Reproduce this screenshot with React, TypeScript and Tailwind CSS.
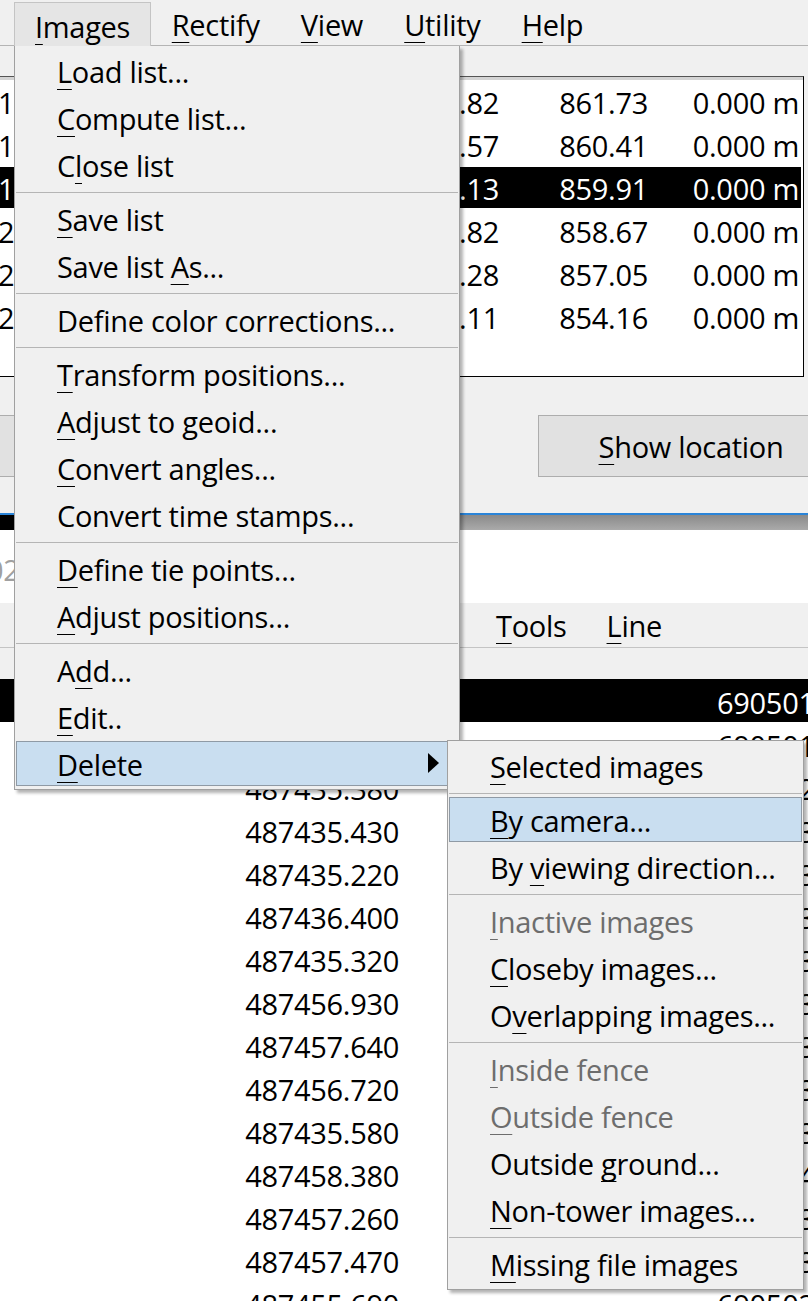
import React from 'react';

type Entry = { label: string; disabled?: boolean; active?: boolean; submenu?: boolean } | '-';

const MAIN_MENU: Entry[] = [
    { label: '&Load list...' },
    { label: '&Compute list...' },
    { label: 'C&lose list' },
    '-',
    { label: '&Save list' },
    { label: 'Save list &As...' },
    '-',
    { label: 'Define color corrections...' },
    '-',
    { label: '&Transform positions...' },
    { label: '&Adjust to geoid...' },
    { label: '&Convert angles...' },
    { label: 'Convert time stamps...' },
    '-',
    { label: '&Define tie points...' },
    { label: '&Adjust positions...' },
    '-',
    { label: 'A&dd...' },
    { label: '&Edit..' },
    { label: '&Delete', active: true, submenu: true },
];

const DELETE_MENU: Entry[] = [
    { label: '&Selected images' },
    '-',
    { label: '&By camera...', active: true },
    { label: 'By &viewing direction...' },
    '-',
    { label: '&Inactive images', disabled: true },
    { label: '&Closeby images...' },
    { label: 'O&verlapping images...' },
    '-',
    { label: '&Inside fence', disabled: true },
    { label: '&Outside fence', disabled: true },
    { label: 'Outside &ground...' },
    { label: '&Non-tower images...' },
    '-',
    { label: '&Missing file images' },
];

const POSITIONS = [
    { name: '1518', x: '487429.82', y: '861.73', d: '0.000 m' },
    { name: '1519', x: '487431.57', y: '860.41', d: '0.000 m' },
    { name: '1520', x: '487433.13', y: '859.91', d: '0.000 m', selected: true },
    { name: '2101', x: '487434.82', y: '858.67', d: '0.000 m' },
    { name: '2102', x: '487436.28', y: '857.05', d: '0.000 m' },
    { name: '2103', x: '487438.11', y: '854.16', d: '0.000 m' },
];

const IMAGES = [
    { x: '487435.390', y: '690501', selected: true },
    { x: '487435.410', y: '690501' },
    { x: '487435.380', y: '690502' },
    { x: '487435.430', y: '690503' },
    { x: '487435.220', y: '690503' },
    { x: '487436.400', y: '690503' },
    { x: '487435.320', y: '690503' },
    { x: '487456.930', y: '690503' },
    { x: '487457.640', y: '690503' },
    { x: '487456.720', y: '690503' },
    { x: '487435.580', y: '690503' },
    { x: '487458.380', y: '690504' },
    { x: '487457.260', y: '690503' },
    { x: '487457.470', y: '690503' },
    { x: '487455.690', y: '690502' },
];

function Label({ text }: { text: string }) {
    const i = text.indexOf('&');
    if (i < 0) return <>{text}</>;
    return (
        <>
            {text.slice(0, i)}
            <span className="underline decoration-1 underline-offset-[6px] [text-decoration-skip-ink:none]">{text[i + 1]}</span>
            {text.slice(i + 2)}
        </>
    );
}

function PopupMenu({ entries, className }: { entries: Entry[]; className: string }) {
    return (
        <div className={`absolute border border-[#a0a0a0] bg-[#f0f0f0] pt-[2px] pb-px shadow-[3px_3px_3px_rgba(0,0,0,0.3)] ${className}`}>
            {entries.map((e, i) =>
                e === '-' ? (
                    <div key={i} className="h-[7px] flex items-center px-px">
                        <div className="h-px w-full bg-[#b5b5b5]" />
                    </div>
                ) : (
                    <div key={i} className="relative h-[47px] flex items-center whitespace-nowrap">
                        {e.active && <div className="absolute left-px right-px top-0 bottom-[2px] border border-[#8f9aa5] bg-[#c9def0]" />}
                        <span className={`relative pl-[42px] leading-[47px] ${e.disabled ? 'text-[#6d6d6d]' : ''}`}>
                            <Label text={e.label} />
                        </span>
                        {e.submenu && (
                            <svg className="relative ml-auto mr-[20px] mb-[4px]" width="11" height="20" viewBox="0 0 11 20">
                                <path d="M0 0 L11 10 L0 20 Z" fill="#000" />
                            </svg>
                        )}
                    </div>
                ),
            )}
        </div>
    );
}

function MenuBar() {
    const items = ['&Rectify', '&View', '&Utility', '&Help'];
    return (
        <div className="h-[46px] border-b border-[#b4b4b4] flex items-end pl-[14px]">
            <div className="h-[44px] -mb-px border border-b-0 border-[#c4c4c4] bg-[#e5e5e5] px-[20px] pt-[3px] leading-[41px]">
                <Label text="&Images" />
            </div>
            {items.map((t) => (
                <div key={t} className="h-[44px] px-[20.6px] pt-[3px] leading-[41px]">
                    <Label text={t} />
                </div>
            ))}
        </div>
    );
}

function PositionTable() {
    return (
        <div className="-ml-[2px] w-[806px] h-[301px] bg-white border-t border-t-[#555] border-r border-r-black border-b border-b-black">
            <div className="h-[3px] bg-[#d4d4d4] mb-px" />
            {POSITIONS.map((r) => (
                <div
                    key={r.name}
                    className={`flex h-[43px] leading-[43px] whitespace-nowrap mr-[2px] ${r.selected ? 'bg-black text-white shadow-[inset_0_-2px_0_#fff]' : ''}`}
                >
                    <span className="w-[202px] shrink-0 overflow-hidden">{r.name}</span>
                    <span className="w-[299px] shrink-0 text-right">{r.x}</span>
                    <span className="w-[149px] shrink-0 text-right">{r.y}</span>
                    <span className="w-[151px] shrink-0 text-right">{r.d}</span>
                </div>
            ))}
        </div>
    );
}

function ImageTable() {
    return (
        <div className="border-t-2 border-black bg-white">
            {IMAGES.map((r, i) => (
                <div
                    key={i}
                    className={`flex h-[43px] leading-[43px] whitespace-nowrap ${r.selected ? 'bg-black text-white shadow-[inset_0_-2px_0_#fff]' : ''}`}
                >
                    <span className="w-[399px] shrink-0 text-right">{r.x}</span>
                    <span className="ml-[318px]">{r.y}</span>
                </div>
            ))}
        </div>
    );
}

export default function App() {
    return (
        <div className="relative w-[808px] h-[1301px] overflow-hidden bg-[#f0f0f0] text-black text-[29px] tracking-[-0.3px] font-['Open_Sans','Noto_Sans',sans-serif]">
            <MenuBar />
            <div className="h-[30px]" />
            <PositionTable />

            <div className="flex h-[100px] pt-[38px]">
                <div className="-ml-px w-[200px] shrink-0 h-[62px] border border-[#adadad] bg-[#e1e1e1]" />
                <div className="ml-[339px] w-[306px] shrink-0 h-[62px] border border-[#adadad] bg-[#e1e1e1] flex items-center justify-center leading-none">
                    <span>
                        <Label text="&Show location" />
                    </span>
                </div>
            </div>

            <div className="h-[36px]" />
            <div className="h-[2px] bg-[#2a84d8]" />
            <div className="flex h-[15px]">
                <div className="w-[20px] bg-black" />
                <div className="flex-1 bg-gradient-to-b from-[#8a8a8a] to-[#aaaaaa]" />
            </div>

            <div className="h-[73px] bg-white flex items-center pt-[6px]">
                <span className="-ml-[13px] text-[#a0a0a0]">02</span>
            </div>

            <div className="h-[45px] border-b border-[#c4c4c4] flex pl-[476px] pt-px">
                {['&Tools', '&Line'].map((t) => (
                    <div key={t} className="px-[20px] leading-[44px]">
                        <Label text={t} />
                    </div>
                ))}
            </div>
            <div className="h-[31px]" />
            <ImageTable />

            <PopupMenu entries={MAIN_MENU} className="left-[14px] top-[46px] w-[446px] border-t-0" />
            <PopupMenu entries={DELETE_MENU} className="left-[447px] top-[740px] w-[357px]" />
        </div>
    );
}
